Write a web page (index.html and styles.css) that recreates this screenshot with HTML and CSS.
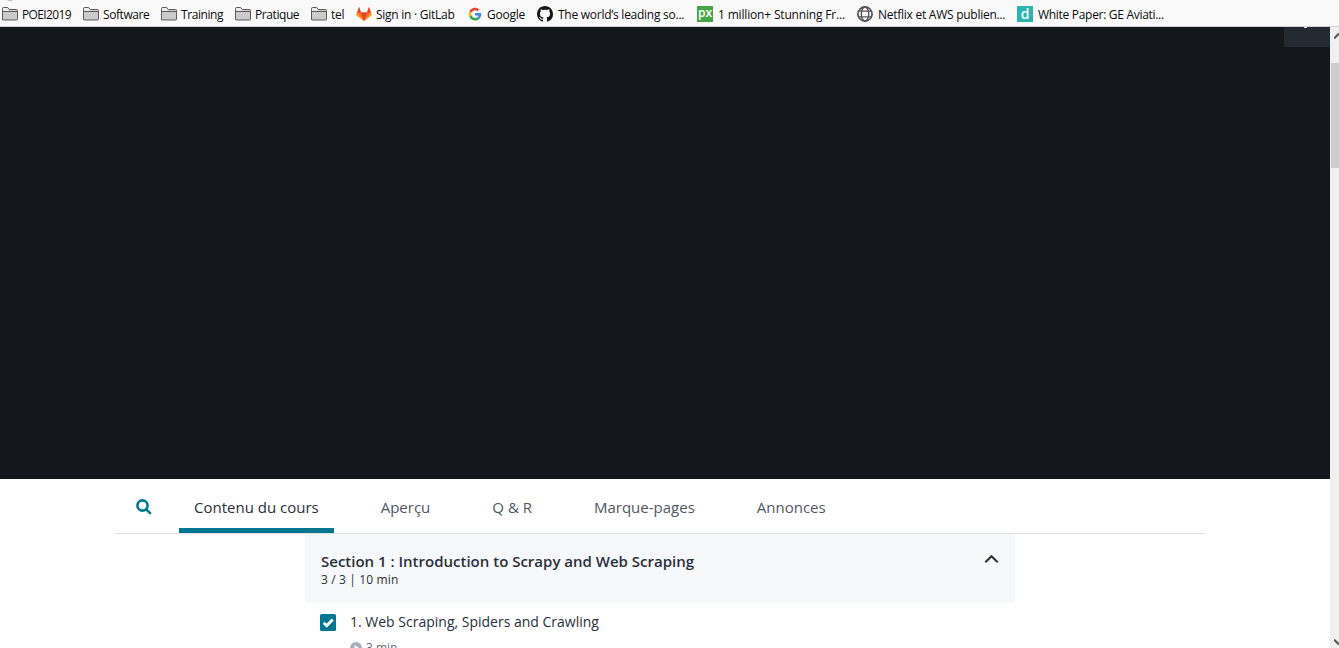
FILE: index.html
```html
<!DOCTYPE html>
<html lang="fr">
<head>
<meta charset="utf-8">
<title>Contenu du cours</title>
<link rel="stylesheet" href="styles.css">
</head>
<body>
<svg class="defs" width="0" height="0">
  <symbol id="folder" viewBox="0 0 16 16"><path d="M.5 14V2.500q0-1 1-1h4.200l1.600 2h7.200q1 0 1 1V13q0 1-1 1h-13q-1 0-1-1z" fill="#cbcbcb" stroke="#5c5c5c"/><path d="M1 5.500h14" fill="none" stroke="#5c5c5c"/><path d="M1 2h4.400l1.300 2v1H1z" fill="#ececec"/></symbol>
  <symbol id="globe" viewBox="0 0 16 16"><g fill="none" stroke="#555" stroke-width="1.400"><circle cx="8" cy="8" r="7.100" stroke-width="1.700"/><ellipse cx="8" cy="8" rx="3.700" ry="7"/><path d="M1.800 5.200h12.400M1.800 10.800h12.400" stroke-width="1.200"/></g></symbol>
</svg>
<nav class="bookmarks">
  <a class="bookmark tight"><svg class="icon"><use href="#folder"/></svg><span>POEI2019</span></a>
  <a class="bookmark snug"><svg class="icon"><use href="#folder"/></svg><span>Software</span></a>
  <a class="bookmark snug"><svg class="icon"><use href="#folder"/></svg><span>Training</span></a>
  <a class="bookmark snug"><svg class="icon"><use href="#folder"/></svg><span>Pratique</span></a>
  <a class="bookmark"><svg class="icon"><use href="#folder"/></svg><span>tel</span></a>
  <a class="bookmark loose"><svg class="icon" viewBox="0 0 16 16"><path d="M8 15 .2 9.100 3.100 1l1.800 5.400h6.200L12.900 1l2.900 8.100z" fill="#fc6d26"/><path d="M8 15 4.900 6.400h6.200z" fill="#e24329"/><path d="M.2 9.100 1.100 6.400 8 15zM15.800 9.100l-.9-2.700L8 15z" fill="#fca326"/><path d="M1.100 6.400 3.100 1l1.800 5.400zM14.900 6.400 12.900 1l-1.800 5.400z" fill="#e24329"/></svg><span>Sign in · GitLab</span></a>
  <a class="bookmark loose"><svg class="icon" viewBox="0 0 48 48"><g transform="translate(5 5) scale(.8)"><path fill="#ea4335" d="M24 9.500c3.540 0 6.710 1.220 9.210 3.600l6.850-6.850C35.900 2.380 30.470 0 24 0 14.620 0 6.510 5.380 2.560 13.220l7.980 6.190C12.430 13.720 17.740 9.500 24 9.500z"/><path fill="#4285f4" d="M46.980 24.550c0-1.570-.15-3.090-.38-4.550H24v9.020h12.940c-.58 2.960-2.260 5.480-4.780 7.180l7.730 6c4.510-4.180 7.090-10.360 7.090-17.650z"/><path fill="#fbbc05" d="M10.530 28.590a14.500 14.500 0 0 1 0-9.180l-7.980-6.190a24 24 0 0 0 0 21.560z"/><path fill="#34a853" d="M24 48c6.480 0 11.930-2.130 15.890-5.810l-7.730-6c-2.150 1.450-4.920 2.300-8.160 2.300-6.260 0-11.570-4.220-13.470-9.910l-7.980 6.190C6.510 42.620 14.620 48 24 48z"/></g></svg><span>Google</span></a>
  <a class="bookmark loose"><svg class="icon" viewBox="0 0 16 16"><path fill="#161616" fill-rule="evenodd" d="M8 0C3.580 0 0 3.580 0 8c0 3.540 2.290 6.530 5.470 7.590.4.070.55-.17.55-.38 0-.19-.01-.82-.01-1.490-2.010.37-2.530-.49-2.690-.94-.09-.23-.48-.94-.82-1.130-.28-.15-.68-.52-.01-.53.63-.01 1.080.58 1.230.82.720 1.210 1.870.87 2.330.66.070-.52.280-.87.510-1.070-1.780-.2-3.640-.89-3.640-3.950 0-.87.310-1.590.82-2.150-.08-.2-.36-1.020.08-2.120 0 0 .67-.21 2.200.82.640-.18 1.320-.27 2-.27s1.360.09 2 .27c1.530-1.040 2.200-.82 2.200-.82.440 1.100.160 1.920.08 2.120.510.560.820 1.270.820 2.150 0 3.070-1.870 3.750-3.650 3.950.290.250.540.730.540 1.480 0 1.070-.01 1.930-.01 2.200 0 .21.150.46.550.38A8 8 0 0 0 16 8c0-4.420-3.580-8-8-8z"/></svg><span>The world’s leading so...</span></a>
  <a class="bookmark looser"><b class="icon badge px">px</b><span>1 million+ Stunning Fr...</span></a>
  <a class="bookmark loose"><svg class="icon"><use href="#globe"/></svg><span>Netflix et AWS publien...</span></a>
  <a class="bookmark"><b class="icon badge d">d</b><span>White Paper: GE Aviati...</span></a>
</nav>
<div class="viewport">
  <main class="page">
    <section class="player"><button class="player-toggle" aria-label="Menu"><i></i></button></section>
    <div class="tabs">
      <svg class="search" viewBox="0 0 16 16"><circle cx="6.500" cy="6.500" r="5.100"/><path d="m10.300 10.300 4.500 4.500"/></svg>
      <a class="tab active">Contenu du cours</a>
      <a class="tab">Aperçu</a>
      <a class="tab">Q &amp; R</a>
      <a class="tab">Marque-pages</a>
      <a class="tab">Annonces</a>
    </div>
    <section class="course">
      <header class="section-head">
        <div><h2>Section 1 : Introduction to Scrapy and Web Scraping</h2><p>3 / 3 | 10 min</p></div>
        <svg class="chevron" viewBox="0 0 16 10"><path d="m2.300 8.200 6.200-6 6.200 6"/></svg>
      </header>
      <div class="lecture">
        <svg class="check" viewBox="0 0 16 17"><rect width="16" height="17" rx="1.500" fill="#007791"/><path d="m3.700 8.700 3 3 6-6.200" fill="none" stroke="#fff" stroke-width="2.900"/></svg>
        <div>
          <h3>1. Web Scraping, Spiders and Crawling</h3>
          <p class="duration"><svg class="play" viewBox="0 0 12 12"><circle cx="6" cy="6" r="6" fill="#a9afba"/><path d="M4.500 3v6L9 6z" fill="#fff"/></svg><span>3 min</span></p>
        </div>
      </div>
    </section>
  </main>
  <aside class="scrollbar">
    <svg class="arrow" viewBox="0 0 5 8"><path d="m0 6.500 5-5"/></svg>
    <div class="thumb"></div>
    <svg class="arrow down" viewBox="0 0 5 8"><path d="m0 1.500 5 5"/></svg>
  </aside>
</div>
</body>
</html>
```
FILE: styles.css
```css
* { box-sizing: border-box; }
body { margin: 0; height: 648px; overflow: hidden; background: #fff; font-family: "Open Sans", sans-serif; color: #29303b; }
h2, h3, p { margin: 0; }
.defs { display: block; }
.bookmarks { height: 27px; padding: 2px 0 0 2px; display: grid; grid-template-columns: 81px 78px 74px 76px 45px 111px 70px 160px 160px 160px 160px; background: radial-gradient(ellipse 5px 2px at 10px 0, #c4c4c4 50%, transparent 60%) #f9f9fa; border-bottom: 1px solid #d2d2d3; color: #0c0c0d; font: 12px/24px "Open Sans", sans-serif; letter-spacing: -.3px; }
.bookmark { display: flex; align-items: center; gap: 4px; white-space: nowrap; }
.bookmark span { padding-top: 2px; line-height: 22px; }
.bookmark:nth-child(n+8) { gap: 5px; }
.tight { letter-spacing: -.62px; }
.snug { letter-spacing: -.42px; }
.loose { letter-spacing: -.26px; }
.looser { letter-spacing: -.17px; }
.icon { width: 16px; height: 16px; flex: none; }
.badge { color: #fff; text-align: center; font: 600 12px/14px "Open Sans", sans-serif; letter-spacing: 0; }
.px { background: #46a546; }
.d { background: #2bb3ac; font-size: 14px; line-height: 15px; }
.viewport { height: 621px; display: flex; }
.page { width: 1330px; overflow: hidden; }
.player { height: 452px; display: flex; justify-content: flex-end; background: #14171c; }
.player-toggle { width: 46px; height: 20px; padding: 0; border: 0; background: #232a32; display: flex; justify-content: center; }
.player-toggle i { width: 3px; height: 1px; margin-right: 3px; background: #fff; }
.tabs { width: 1090px; height: 55px; margin-left: 115px; display: flex; border-bottom: 1px solid #dedfe0; }
.search { width: 16px; height: 16px; margin: 20px 27px 0 21px; fill: none; stroke: #007791; stroke-width: 2.600; }
.tab { height: 54px; margin-right: 32px; padding: 0 15px; font-size: 15px; line-height: 57px; color: #505763; white-space: nowrap; }
.active { color: #29303b; border-bottom: 5px solid #007791; }
.course { width: 710px; margin-left: 305px; }
.section-head { height: 69px; padding: 17px 16px 0; display: flex; justify-content: space-between; background: #f7f8fa; }
.section-head h2 { font-size: 15px; line-height: 21px; font-weight: 600; }
.section-head p { font-size: 12px; line-height: 16px; letter-spacing: .14px; }
.chevron { width: 16px; height: 10px; margin-top: 3px; fill: none; stroke: #29303b; stroke-width: 2; }
.lecture { display: flex; gap: 14px; padding: 11px 15px 0; }
.check { width: 16px; height: 17px; }
.lecture h3 { font-size: 14px; line-height: 15px; font-weight: 400; }
.duration { display: flex; align-items: center; gap: 4px; margin-top: 10px; color: #686f7a; font-size: 12px; line-height: 18px; }
.play { width: 12px; height: 12px; }
.scrollbar { width: 9px; display: flex; flex-direction: column; background: #f0f0f0; padding: 5px 0 2px 1px; }
.arrow { width: 5px; height: 8px; align-self: flex-end; fill: none; stroke: #555; stroke-width: 2; }
.thumb { height: 105px; margin-top: 23px; background: #cdcdcd; }
.down { margin-top: auto; }
```
